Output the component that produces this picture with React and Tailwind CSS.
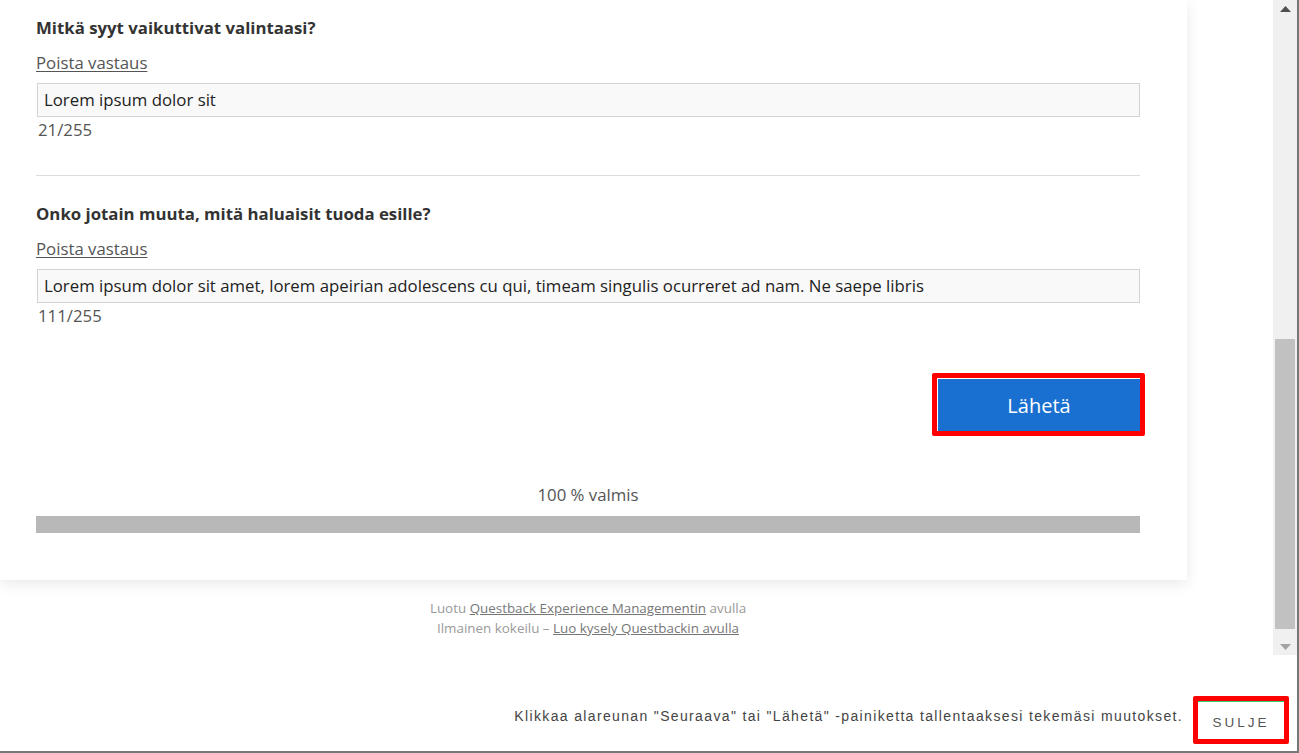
import { useState } from "react";

const Question = ({ title, value, max, divider }) => {
  return (
    <div className={divider ? "pb-[33px] border-b border-[#dcdcdc]" : ""}>
      <h3 className="text-[16.8px] leading-[24px] font-bold text-[#333]">{title}</h3>
      <a href="#" className="inline-block mt-[11px] text-[16.8px] leading-[24px] text-[#555] underline underline-offset-2">
        Poista vastaus
      </a>
      <div className="mt-[8px] ml-[1px] h-[34px] border border-[#d3d3d3] bg-[#f9f9f9] px-[6px] flex items-center text-[16.8px] text-[#222]">
        {value}
      </div>
      <div className="mt-[1px] ml-[2px] text-[16.8px] leading-[24px] text-[#555]">
        {value.length}/{max}
      </div>
    </div>
  );
};

const App = () => {
  const [answers] = useState([
    "Lorem ipsum dolor sit",
    "Lorem ipsum dolor sit amet, lorem apeirian adolescens cu qui, timeam singulis ocurreret ad nam. Ne saepe libris",
  ]);

  return (
    <div className="w-[1299px] h-[753px] bg-white border-r-2 border-b-2 border-[#777] flex flex-col overflow-hidden font-['Open_Sans',sans-serif]">
      <div className="h-[655px] flex">
        <div className="w-[1273px] h-full overflow-hidden">
          <div className="w-[1187px] bg-white shadow-[0_4px_14px_rgba(0,0,0,0.09)] pl-[36px] pr-[47px] pt-[16px] pb-[47px]">
            <Question title="Mitkä syyt vaikuttivat valintaasi?" value={answers[0]} max={255} divider />
            <div className="mt-[26px]">
              <Question title="Onko jotain muuta, mitä haluaisit tuoda esille?" value={answers[1]} max={255} />
            </div>
            <div className="flex justify-end mt-[45px] mr-[-5px]">
              <div className="border-[5px] border-[#ff0000] rounded-[2px]">
                <button className="w-[203px] h-[53px] bg-[#1a70d0] border-t border-l border-white text-white text-[20px] pt-[1px]">
                  Lähetä
                </button>
              </div>
            </div>
            <div className="mt-[47px] text-center text-[16.8px] leading-[24px] text-[#555]">100 % valmis</div>
            <div className="mt-[9px] h-[17px] bg-[#b8b8b8]"></div>
          </div>
          <div className="w-[1187px] pl-[36px] pr-[47px] pt-[18px] text-center text-[13.4px] leading-[20px] text-[#9a9a9a]">
            <div>
              Luotu <a href="#" className="underline text-[#777]">Questback Experience Managementin</a> avulla
            </div>
            <div>
              Ilmainen kokeilu – <a href="#" className="underline text-[#777]">Luo kysely Questbackin avulla</a>
            </div>
          </div>
        </div>
        <div className="w-[24px] h-full bg-[#f0f0f0] flex flex-col items-center">
          <div className="h-[17px] w-full flex items-center justify-center">
            <svg width="11" height="6" viewBox="0 0 11 6"><path d="M5.5 0 L11 6 L0 6 Z" fill="#505050" /></svg>
          </div>
          <div className="flex-1 w-full px-[2px] pt-[322px] pb-[9px] flex">
            <div className="w-full h-[290px] bg-[#c1c1c1]"></div>
          </div>
          <div className="h-[17px] w-full flex items-center justify-center">
            <svg width="11" height="6" viewBox="0 0 11 6"><path d="M0 0 L11 0 L5.5 6 Z" fill="#a3a3a3" /></svg>
          </div>
        </div>
      </div>
      <div className="flex-1 flex items-end justify-end pr-[8px] pb-[7px] font-['Liberation_Sans',Arial,sans-serif]">
        <span className="mb-[17px] mr-[10px] text-[14px] text-[#444] tracking-[1.35px]">
          Klikkaa alareunan "Seuraava" tai "Lähetä" -painiketta tallentaaksesi tekemäsi muutokset.
        </span>
        <div className="border-[5px] border-[#ff0000] rounded-[2px]">
          <button className="w-[86px] h-[38px] bg-white border-t border-[#2ecc71] text-[13.5px] tracking-[3px] text-[#555] pt-[6px]">
            SULJE
          </button>
        </div>
      </div>
    </div>
  );
};

export default App;
